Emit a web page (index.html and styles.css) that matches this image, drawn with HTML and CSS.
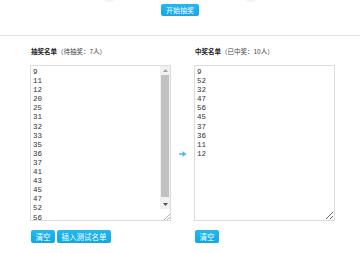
FILE: index.html
```html
<!DOCTYPE html>
<html>
<head>
    <meta charset="utf-8">
    <title>抽奖</title>
    <link rel="stylesheet" href="styles.css">
</head>
<body>
    <div class="top">
        <div class="avatar"></div>
        <button class="btn">开始抽奖</button>
        <div class="avatar"></div>
    </div>

    <div class="lists">
        <div class="col">
            <h3 class="title">抽奖名单<span>（待抽奖：7人）</span></h3>
            <div class="box">
                <textarea class="names" id="pool">9
11
12
20
25
31
32
33
35
36
37
41
43
45
47
52
56
60</textarea>
                <!-- scrollbar drawn by hand, headless hides the native one -->
                <div class="scroll">
                    <div class="arrow">
                        <svg width="5" height="3" viewBox="0 0 5 3"><path d="M0 3 L2.5 0 L5 3 Z" fill="#a3a3a3"/></svg>
                    </div>
                    <div class="track"><div class="thumb"></div></div>
                    <div class="arrow">
                        <svg width="5" height="3" viewBox="0 0 5 3"><path d="M0 0 L5 0 L2.5 3 Z" fill="#505050"/></svg>
                    </div>
                    <div class="corner">
                        <svg width="7" height="7" viewBox="0 0 7 7">
                            <path d="M1 7 L7 1 M4 7 L7 4" stroke="#9a9a9a" stroke-width="0.8"/>
                        </svg>
                    </div>
                </div>
            </div>
            <div class="actions">
                <button class="btn">清空</button>
                <button class="btn">插入测试名单</button>
            </div>
        </div>

        <div class="mid">
            <svg width="8" height="6" viewBox="0 0 8 6">
                <path d="M0 3 H5" stroke="#4fbbe2" stroke-width="1.6"/>
                <path d="M3.5 0 L7.5 3 L3.5 6 Z" fill="#4fbbe2"/>
            </svg>
        </div>

        <div class="col">
            <h3 class="title">中奖名单<span>（已中奖：10人）</span></h3>
            <div class="box">
                <textarea class="names resizable" id="winners">9
52
32
47
56
45
37
36
11
12</textarea>
            </div>
            <div class="actions">
                <button class="btn">清空</button>
            </div>
        </div>
    </div>
</body>
</html>
```

FILE: styles.css
```css
/* page */
body {
    margin: 0;
    font-family: "Liberation Sans", "Noto Sans CJK SC", sans-serif;
    color: #333;
    background: #fff;
}

/* top bar with start button */
.top {
    height: 31px;
    padding-top: 4px;
    display: flex;
    justify-content: center;
    align-items: flex-start;
    gap: 42px;
    border-bottom: 1px solid #e4e4e4;
}

.avatar {
    width: 20px;
    height: 20px;
    margin-top: -22px;
    border-radius: 50%;
    background: #f3f3f3;
}

.btn {
    height: 13px;
    padding: 0 4.5px;
    border: none;
    border-radius: 2px;
    background: linear-gradient(#22b8f2, #12a6e6);
    color: #fff;
    font-family: "Noto Sans CJK SC", sans-serif;
    font-size: 7.5px;
    line-height: 13px;
    cursor: pointer;
}

.top .btn {
    width: 38px;
    height: 12px;
    line-height: 12px;
    padding: 0;
    font-size: 7px;
}

/* the two lists */
.lists {
    display: flex;
    padding-left: 30px;
}

.col {
    width: 141px;
}

.title {
    margin: 11px 0 9px 1px;
    height: 9px;
    font-size: 6.5px;
    line-height: 9px;
    font-family: "Noto Sans CJK SC", sans-serif;
    color: #222;
}

.title span {
    font-weight: normal;
    color: #444;
}

.box {
    display: flex;
    box-sizing: border-box;
    width: 141px;
    height: 156px;
    border: 1px solid #dcdcdc;
}

.names {
    flex: 1;
    display: block;
    margin: 0;
    padding: 2px;
    border: none;
    resize: none;
    overflow: hidden;
    font-family: "Liberation Mono", monospace;
    font-size: 7.5px;
    line-height: 9.1px;
    color: #333;
    outline: none;
}

.names.resizable {
    resize: both;
}

/* fake scrollbar */
.scroll {
    width: 10px;
    display: flex;
    flex-direction: column;
    background: #f1f1f1;
}

.arrow {
    height: 9px;
    display: flex;
    justify-content: center;
    align-items: center;
}

.track {
    flex: 1;
    display: flex;
    padding-bottom: 3px;
}

.thumb {
    flex: 1;
    margin: 0 1px;
    background: #c1c1c1;
}

.corner {
    height: 11px;
    background: #fff;
    display: flex;
    justify-content: flex-end;
    align-items: flex-end;
}

.mid {
    width: 23px;
    padding-top: 115px;
    display: flex;
    justify-content: center;
    align-items: flex-start;
}

.mid svg {
    margin-left: 1px;
}

.actions {
    display: flex;
    gap: 2px;
    margin-top: 9px;
    padding-left: 1px;
}
```
